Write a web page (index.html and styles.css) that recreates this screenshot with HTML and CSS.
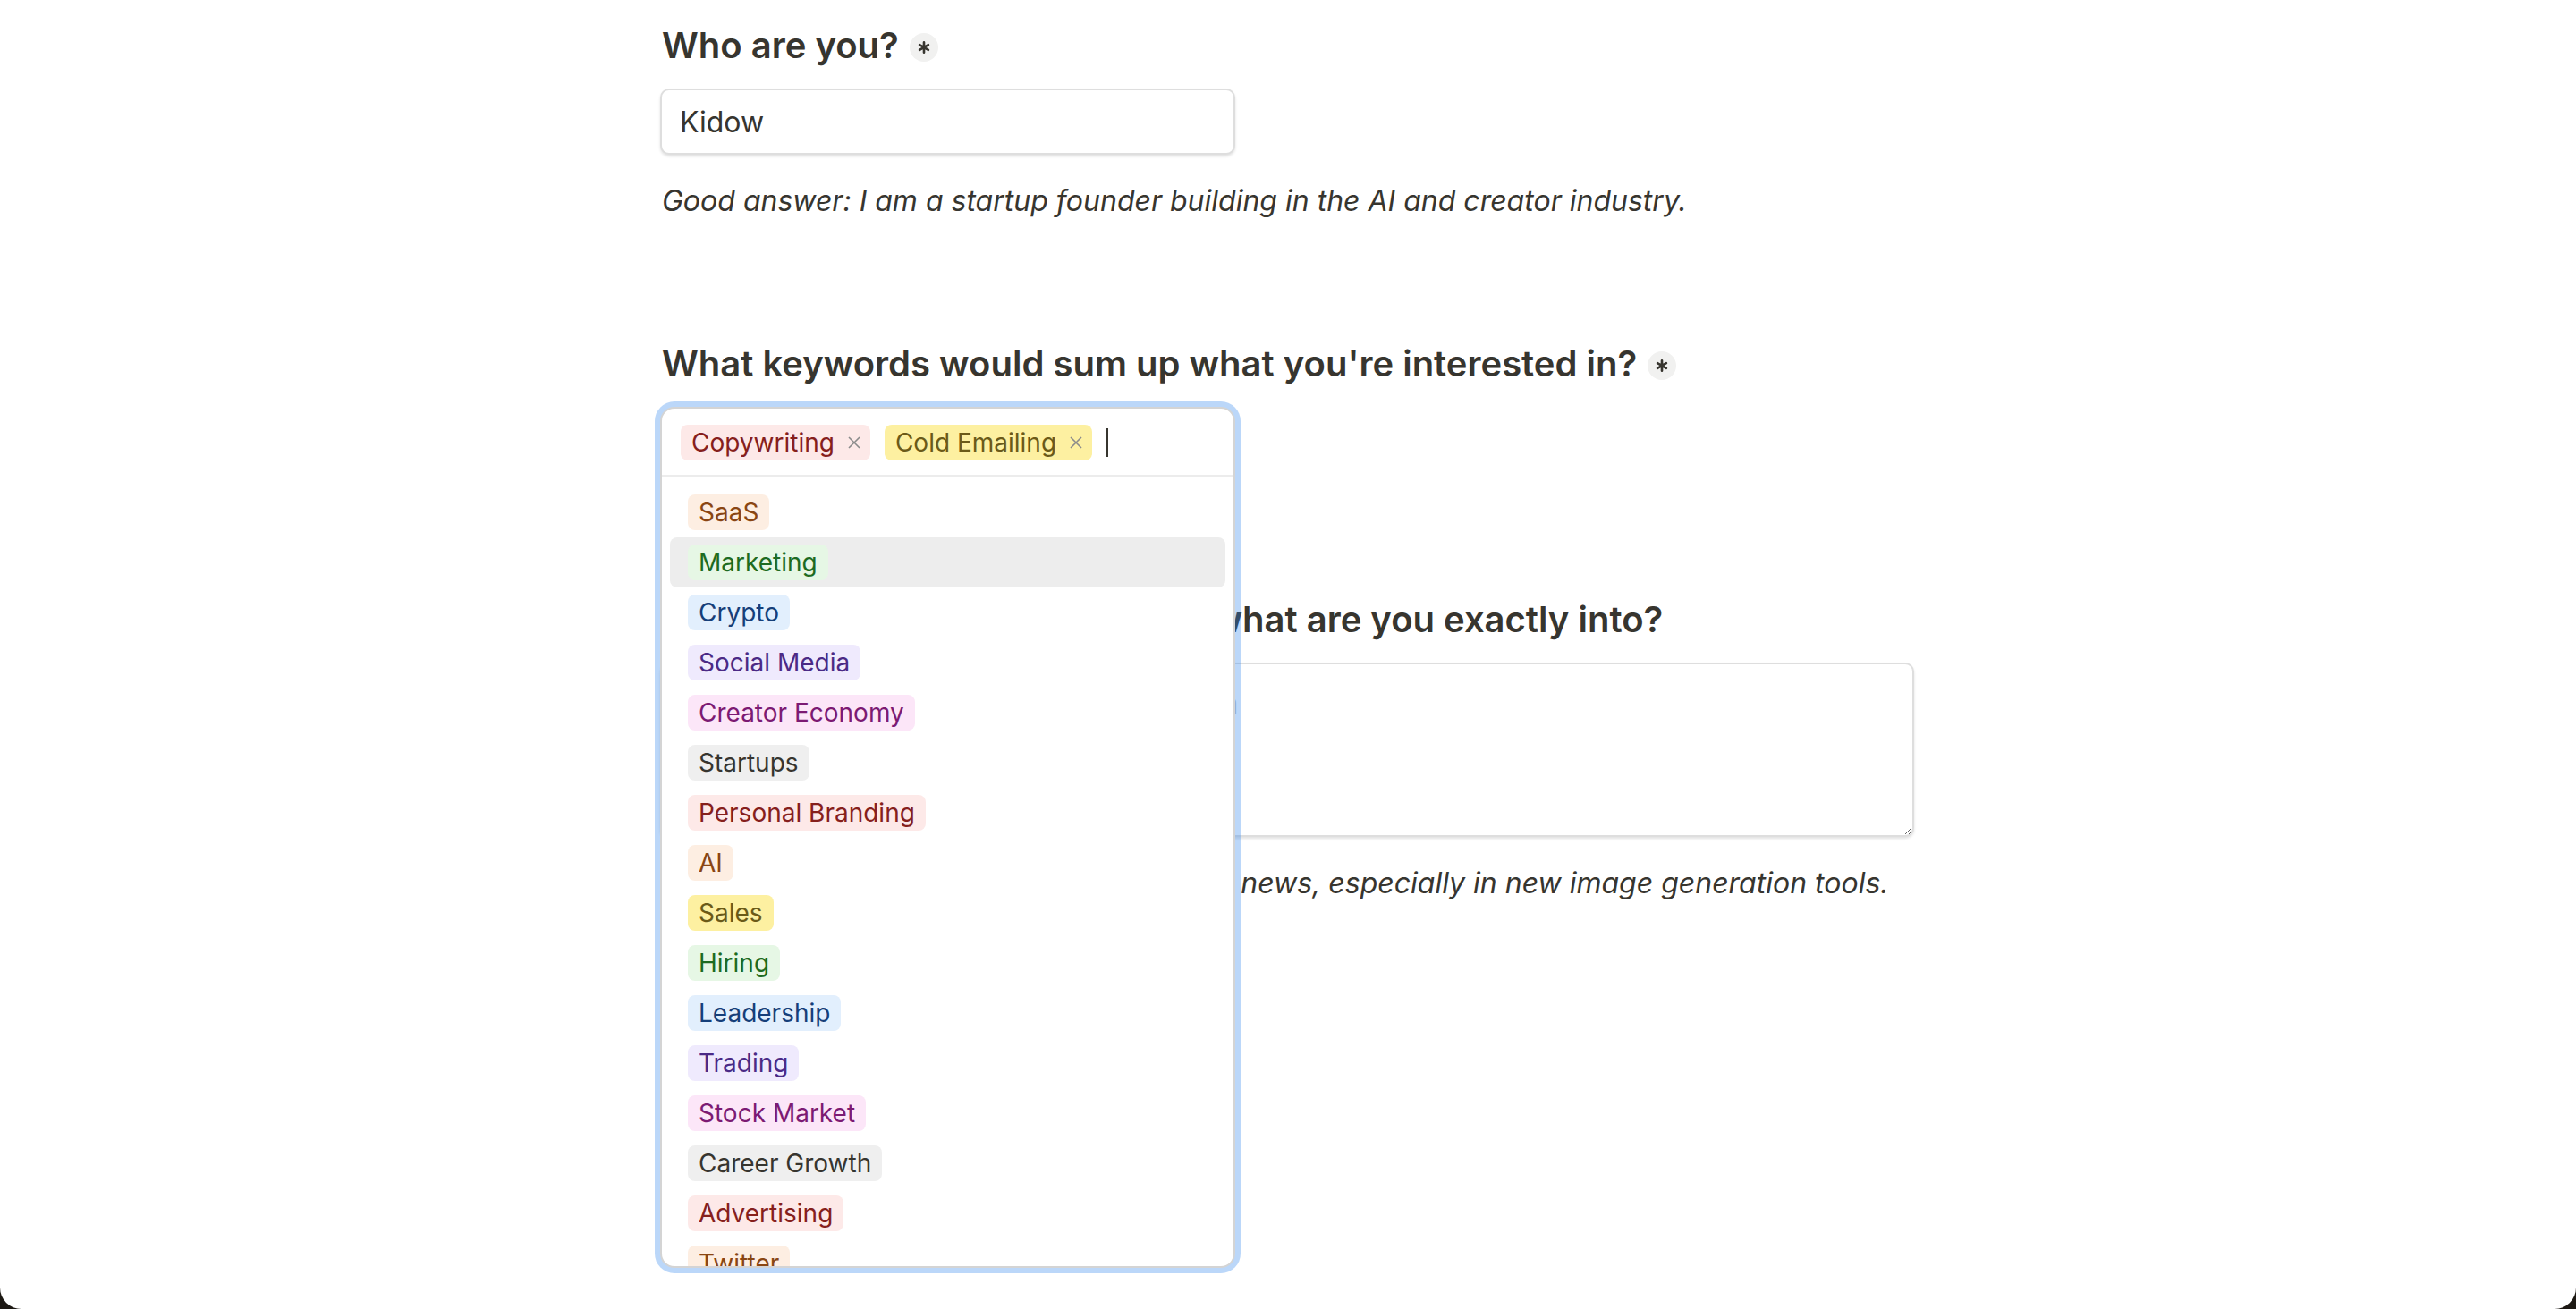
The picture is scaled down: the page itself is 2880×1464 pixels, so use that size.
FILE: index.html
```html
<!DOCTYPE html>
<html lang="en">
<head>
<meta charset="utf-8">
<title>Form</title>
<link rel="stylesheet" href="styles.css">
</head>
<body>
<div class="page">
  <main class="form">
    <section class="question">
      <h2 class="q-title">Who are you? <span class="req"><svg viewBox="0 0 16 16"><path d="M8 1.5V14.5M2.4 4.75L13.6 11.25M13.6 4.75L2.4 11.25"/></svg></span></h2>
      <input class="text-input" type="text" value="Kidow" readonly>
      <p class="hint">Good answer: I am a startup founder building in the AI and creator industry.</p>
    </section>

    <section class="question">
      <h2 class="q-title">What keywords would sum up what you're interested in? <span class="req"><svg viewBox="0 0 16 16"><path d="M8 1.5V14.5M2.4 4.75L13.6 11.25M13.6 4.75L2.4 11.25"/></svg></span></h2>
      <div class="multi">
        <div class="combo">
          <div class="combo-field">
            <span class="tag c-red">Copywriting <svg class="x" viewBox="0 0 14 14"><path d="M1 1L13 13M13 1L1 13"/></svg></span>
            <span class="tag c-yellow">Cold Emailing <svg class="x" viewBox="0 0 14 14"><path d="M1 1L13 13M13 1L1 13"/></svg></span>
            <span class="caret"></span>
          </div>
          <ul class="options">
            <li class="option"><span class="tag c-orange">SaaS</span></li>
            <li class="option active"><span class="tag c-green">Marketing</span></li>
            <li class="option"><span class="tag c-blue">Crypto</span></li>
            <li class="option"><span class="tag c-purple">Social Media</span></li>
            <li class="option"><span class="tag c-pink">Creator Economy</span></li>
            <li class="option"><span class="tag c-gray">Startups</span></li>
            <li class="option"><span class="tag c-red">Personal Branding</span></li>
            <li class="option"><span class="tag c-orange">AI</span></li>
            <li class="option"><span class="tag c-yellow">Sales</span></li>
            <li class="option"><span class="tag c-green">Hiring</span></li>
            <li class="option"><span class="tag c-blue">Leadership</span></li>
            <li class="option"><span class="tag c-purple">Trading</span></li>
            <li class="option"><span class="tag c-pink">Stock Market</span></li>
            <li class="option"><span class="tag c-gray">Career Growth</span></li>
            <li class="option"><span class="tag c-red">Advertising</span></li>
            <li class="option"><span class="tag c-orange">Twitter</span></li>
            <li class="option"><span class="tag c-yellow">Newsletters</span></li>
          </ul>
        </div>
      </div>
    </section>

    <section class="question">
      <h2 class="q-title">If you want to be more specific, what are you exactly into?</h2>
      <textarea class="text-area" placeholder="The more specific, the better the curation"></textarea>
      <p class="hint">Good answer: I am totally into following AI news, especially in new image generation tools.</p>
    </section>

    <div class="actions">
      <button class="submit" type="button">Submit</button>
    </div>
  </main>
</div>
</body>
</html>
```
FILE: styles.css
```css
* { box-sizing: border-box; }

html {
  background: #1d1914;
}

body {
  margin: 0;
  font-family: Inter, "Noto Sans", "Liberation Sans", sans-serif;
  color: #37352f;
}

.page {
  height: 1464px;
  background: #ffffff;
  border-radius: 0 0 24px 24px;
  overflow: hidden;
}

.form {
  width: 1404px;
  margin: 0 auto;
  padding-top: 27px;
}

.question {
  display: flex;
  flex-direction: column;
  align-items: flex-start;
  margin-bottom: 138px;
}

.q-title {
  margin: 0 0 24px 2px;
  font-size: 40px;
  line-height: 48px;
  font-weight: 600;
  display: flex;
  align-items: center;
  gap: 12px;
}

.req {
  width: 32px;
  height: 32px;
  border-radius: 50%;
  background: #f1f1f0;
  display: flex;
  align-items: center;
  justify-content: center;
  flex: none;
  margin-top: 4px;
}

.req svg {
  width: 14px;
  height: 14px;
  fill: none;
  stroke: #37352f;
  stroke-width: 3;
  stroke-linecap: round;
}

.text-input {
  width: 643px;
  height: 74px;
  margin: 0;
  padding: 0 20px;
  border: 2px solid #dedede;
  border-radius: 10px;
  box-shadow: 0 2px 3px rgba(15, 15, 15, 0.12);
  font-family: inherit;
  font-size: 32px;
  color: #37352f;
  outline: none;
  background: #fff;
}

.hint {
  margin: 32px 0 0 2px;
  font-size: 32px;
  line-height: 40px;
  font-style: italic;
}

.multi {
  position: relative;
  width: 643px;
  height: 76px;
}

.combo {
  position: absolute;
  top: 0;
  left: 0;
  width: 643px;
  height: 963px;
  display: flex;
  flex-direction: column;
  background: #fff;
  border: 2px solid #d4d4d4;
  border-radius: 16px;
  box-shadow: 0 0 0 6px rgba(44, 132, 235, 0.32);
  overflow: hidden;
  z-index: 5;
}

.combo-field {
  display: flex;
  align-items: center;
  gap: 16px;
  padding: 18px 20px 16px 21px;
  border-bottom: 2px solid #ececec;
  flex: none;
}

.tag {
  display: inline-flex;
  align-items: center;
  height: 40px;
  padding: 0 12px;
  border-radius: 8px;
  font-size: 28px;
  line-height: 40px;
  white-space: nowrap;
}

.combo-field .tag {
  gap: 15px;
  padding: 0 11px 0 12px;
}

.x {
  width: 14px;
  height: 14px;
  fill: none;
  stroke: #8b8b8b;
  stroke-width: 1.6;
}

.caret {
  width: 2px;
  height: 32px;
  background: #37352f;
}

.options {
  list-style: none;
  margin: 0;
  padding: 12px 9px 0 9px;
  flex: 1;
  overflow: hidden;
}

.option {
  display: flex;
  align-items: center;
  height: 56px;
  padding: 8px 20px;
  border-radius: 8px;
}

.option.active {
  background: #ededed;
}

.c-red { background: #fde9e8; color: #86201c; }
.c-yellow { background: #fdf0a1; color: #6b5a18; }
.c-orange { background: #fdeee2; color: #8a4613; }
.c-green { background: #e6f7e5; color: #1d6b21; }
.c-blue { background: #e2effd; color: #163f7a; }
.c-purple { background: #efeafd; color: #4b2a86; }
.c-pink { background: #fce6f8; color: #7c1a73; }
.c-gray { background: #efefef; color: #37352f; }

.text-area {
  display: block;
  width: 1402px;
  height: 195px;
  margin: 0;
  padding: 24px 18px;
  border: 2px solid #dedede;
  border-radius: 10px;
  box-shadow: 0 2px 3px rgba(15, 15, 15, 0.12);
  font-family: inherit;
  font-size: 32px;
  line-height: 40px;
  color: #37352f;
  outline: none;
  resize: vertical;
}

.text-area::placeholder {
  color: #c4c3c0;
}

.actions {
  margin-top: 133px;
}

.submit {
  height: 64px;
  padding: 0 36px;
  border: 2px solid #d0d0d0;
  border-radius: 10px;
  background: #8d9aa8;
  color: #fff;
  font-family: inherit;
  font-size: 28px;
  font-weight: 600;
}
```
